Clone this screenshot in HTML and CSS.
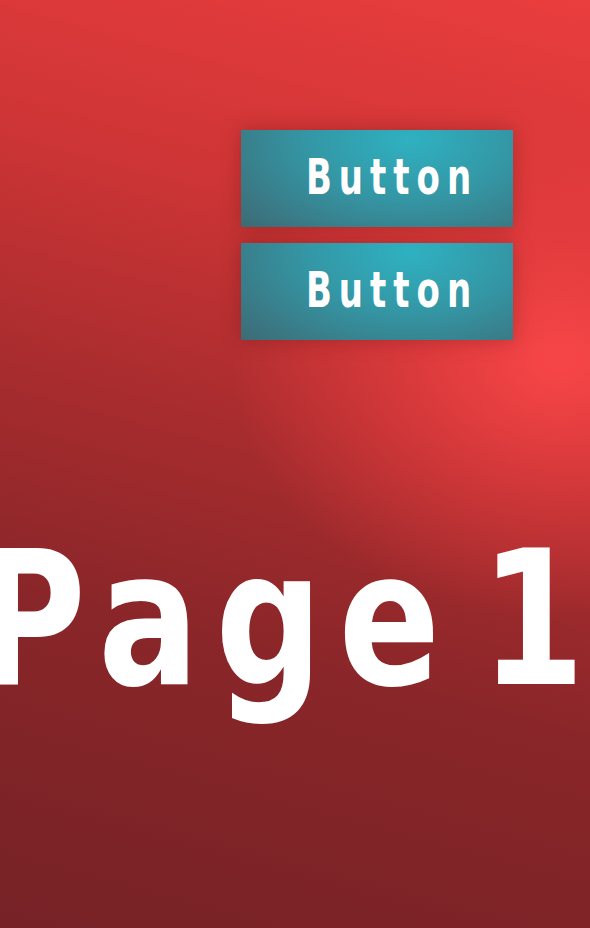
FILE: index.html
```html
<!DOCTYPE html>
<html>
<head>
<meta charset="utf-8">
<link rel="stylesheet" href="styles.css">
</head>
<body>
<main class="page">
  <div class="actions">
    <button class="btn"><span class="btn-label">Button</span></button>
    <button class="btn"><span class="btn-label">Button</span></button>
  </div>
  <h1 class="title"><span class="title-text">Page 1</span></h1>
</main>
</body>
</html>
```
FILE: styles.css
```css
html, body {
  margin: 0;
  padding: 0;
}
body {
  width: 590px;
  height: 928px;
  overflow: hidden;
  background:
    radial-gradient(ellipse 330px 260px at 560px 360px, rgba(248,70,72,1) 0%, rgba(240,64,66,0.6) 45%, rgba(230,60,60,0) 100%),
    linear-gradient(195deg, #ea3d3e 0%, #cf3536 25%, #a82c2e 48%, #8a2629 68%, #762226 100%);
  font-family: "DejaVu Sans", sans-serif;
}
.page {
  display: flex;
  flex-direction: column;
  height: 928px;
  overflow: hidden;
}
.actions {
  display: flex;
  flex-direction: column;
  gap: 16px;
  padding: 130px 0 0 241px;
}
.btn {
  width: 272px;
  height: 97px;
  border: 0;
  padding: 0 0 0 30px;
  margin: 0;
  background: radial-gradient(ellipse 260px 150px at 62% 10%, #2fb1c1 0%, #3496a4 40%, #3a7a86 70%, #3f5f68 100%);
  box-shadow: 0 0 18px rgba(90, 20, 20, 0.35);
  color: #fff;
  display: flex;
  align-items: center;
  justify-content: center;
  cursor: pointer;
}
.btn-label {
  display: inline-block;
  font-family: "DejaVu Sans", sans-serif;
  font-weight: 700;
  font-size: 34px;
  letter-spacing: 7px;
  transform: scaleY(1.45);
  line-height: 1;
  margin-top: -4px;
}
.title {
  margin: 0;
  padding: 186px 0 0 0;
  color: #fff;
  font-weight: 700;
  line-height: 1;
  white-space: nowrap;
}
.title-text {
  display: inline-block;
  font-family: "DejaVu Sans", sans-serif;
  font-size: 150px;
  letter-spacing: 16px;
  word-spacing: -44px;
  transform: scaleY(1.244);
  transform-origin: 0 0;
  margin-left: -24px;
}
```
